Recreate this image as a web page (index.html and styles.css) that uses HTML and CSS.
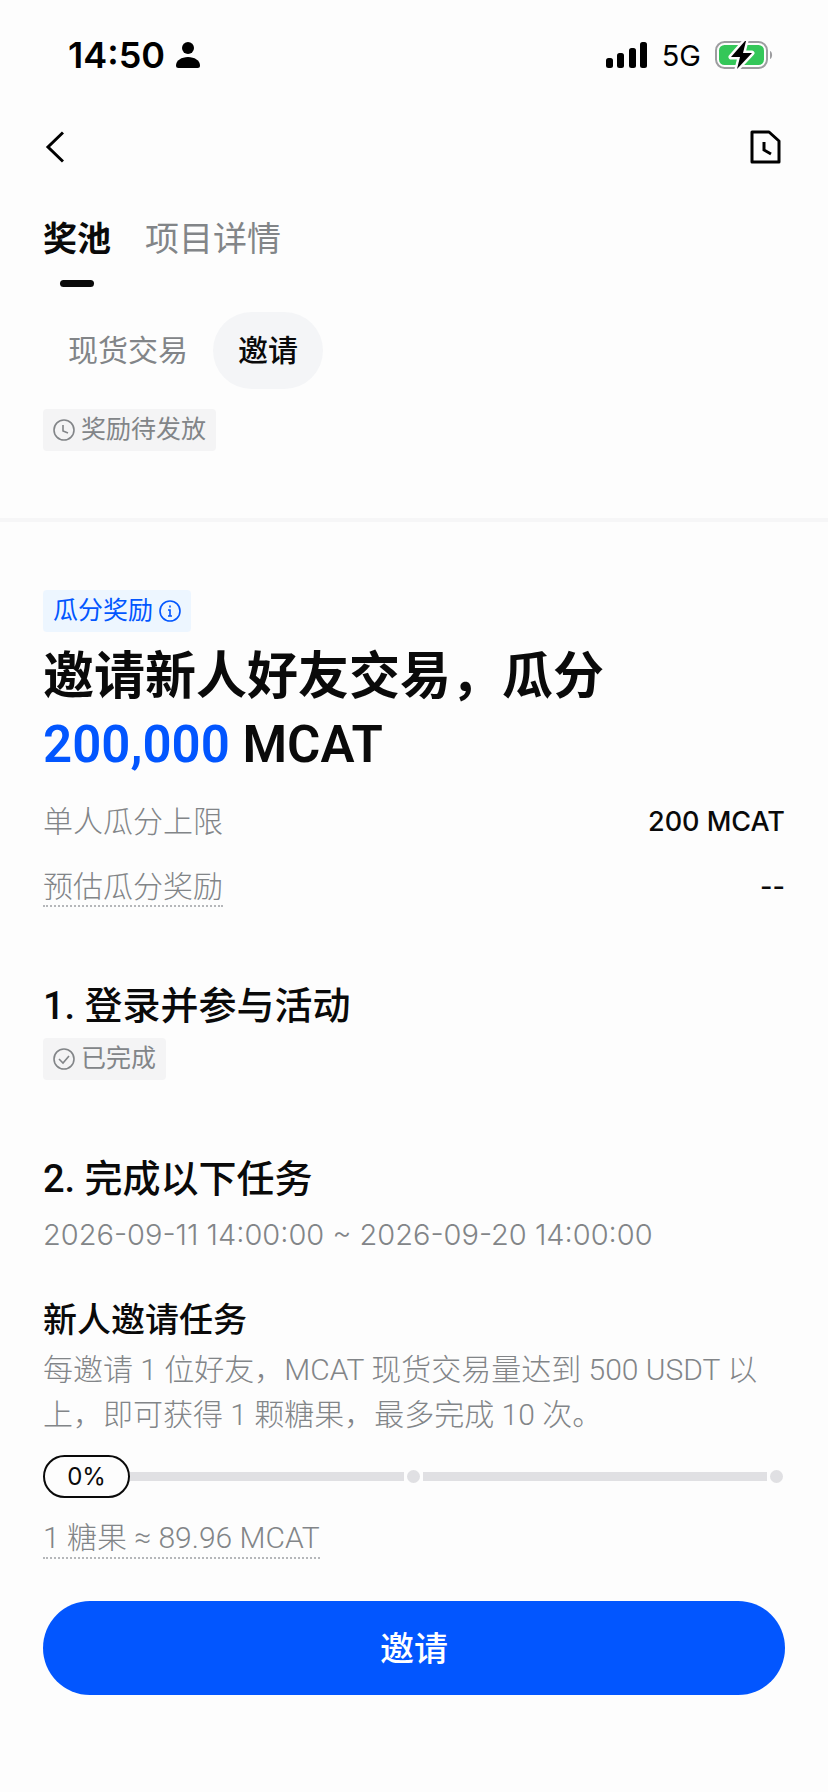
FILE: index.html
```
<!DOCTYPE html>
<html lang="zh-CN">
<head>
  <meta charset="utf-8">
  <meta name="viewport" content="width=device-width, initial-scale=1">
  <title>奖池</title>
  <link rel="stylesheet" href="styles.css">
</head>
<body>
  <div class="status-bar">
    <div class="status-left">
      <span class="time">14:50</span>
      <svg width="24" height="26" viewBox="0 0 24 26">
        <circle cx="12" cy="6" r="6"/>
        <path d="M0 23.5C0 18.5 5.5 15 12 15s12 3.500 12 8.500Q24 26 21.500 26h-19Q0 26 0 23.500z"/>
      </svg>
    </div>
    <div class="status-right">
      <svg width="42" height="26" viewBox="0 0 42 26">
        <rect x="0" y="16" width="7" height="10" rx="2.500"/>
        <rect x="11" y="11" width="7" height="15" rx="2.500"/>
        <rect x="23" y="6" width="7" height="20" rx="2.500"/>
        <rect x="34" y="0" width="7" height="26" rx="2.500"/>
      </svg>
      <span class="network">5G</span>
      <svg width="58" height="30" viewBox="0 0 58 30">
        <rect x="1" y="2" width="51" height="26" rx="8.500" fill="none" stroke="#9d9da0" stroke-width="2"/>
        <path d="M55 11c2.800 1 2.800 7 0 8z" fill="#9d9da0"/>
        <rect x="4" y="5" width="45" height="20" rx="5.500" fill="#34c759"/>
        <path d="M30 1L16 17h9l-3 12 15-16h-9l3-12z" fill="#000" stroke="#fdfdfd" stroke-width="5" stroke-linejoin="round"/>
        <path d="M30 1L16 17h9l-3 12 15-16h-9l3-12z" fill="#000"/>
      </svg>
    </div>
  </div>

  <header class="nav">
    <button type="button" class="icon-button" aria-label="返回">
      <svg width="21" height="32" viewBox="0 0 21 32" fill="none" stroke="#000" stroke-width="3">
        <path d="M20 1.500L5 16l15 14.500"/>
      </svg>
    </button>
    <button type="button" class="icon-button" aria-label="历史记录">
      <svg width="36" height="34" viewBox="0 0 36 34" fill="none" stroke="#000" stroke-width="3">
        <path d="M3 2h17l10 9v21H3z" stroke-linejoin="round"/>
        <path d="M15 12v8l7 4"/>
      </svg>
    </button>
  </header>

  <section class="pool">
    <nav class="tabs">
      <button type="button" class="tab active">奖池</button>
      <button type="button" class="tab">项目详情</button>
    </nav>
    <div class="pills">
      <button type="button" class="pill">现货交易</button>
      <button type="button" class="pill active">邀请</button>
    </div>
    <div class="tag">
      <svg width="22" height="22" viewBox="0 0 22 22" fill="none" stroke="currentColor" stroke-width="1.600">
        <circle cx="11" cy="11" r="10"/>
        <path d="M10 6v6l5 2"/>
      </svg>
      奖励待发放
    </div>
  </section>

  <main class="content">
    <div class="tag blue">
      瓜分奖励
      <svg width="22" height="22" viewBox="0 0 22 22" fill="none" stroke="currentColor" stroke-width="1.600">
        <circle cx="11" cy="11" r="10"/>
        <path d="M11 5.500v2M9 10h2v6M9 16h4"/>
      </svg>
    </div>
    <h1>邀请新人好友交易，瓜分<br><span class="amount">200,000</span> MCAT</h1>
    <div class="row">
      <span>单人瓜分上限</span>
      <span class="value">200 MCAT</span>
    </div>
    <div class="row">
      <span class="dotted">预估瓜分奖励</span>
      <span class="value">--</span>
    </div>

    <h2>1. 登录并参与活动</h2>
    <div class="tag">
      <svg width="22" height="22" viewBox="0 0 22 22" fill="none" stroke="currentColor" stroke-width="1.600">
        <circle cx="11" cy="11" r="10"/>
        <path d="M6 11l4 4 6-7"/>
      </svg>
      已完成
    </div>

    <h2>2. 完成以下任务</h2>
    <p class="period">2026-09-11 14:00:00 ~ 2026-09-20 14:00:00</p>

    <h3>新人邀请任务</h3>
    <p class="desc">每邀请 1 位好友，MCAT 现货交易量达到 500 USDT 以上，即可获得 1 颗糖果，最多完成 10 次。</p>
    <div class="progress" role="progressbar" aria-valuenow="0" aria-valuemin="0" aria-valuemax="100" aria-label="任务进度">
      <div class="half">
        <span class="percent">0%</span>
        <span class="track"></span>
      </div>
      <span class="dot"></span>
      <div class="half">
        <span class="track"></span>
        <span class="dot"></span>
      </div>
    </div>
    <span class="dotted candy">1 糖果 ≈ 89.96 MCAT</span>

    <button type="button" class="invite">邀请</button>
  </main>
</body>
</html>
```
FILE: styles.css
```
* {
  box-sizing: border-box;
}

body {
  margin: 0;
  background: #fdfdfd;
  color: #0a0a0a;
  font-family: Roboto, "Noto Sans CJK SC", sans-serif;
  font-size: 30px;
}

h1, h2, h3, p {
  margin: 0;
}

button {
  padding: 0;
  border: none;
  background: none;
  color: inherit;
  font-family: inherit;
  cursor: pointer;
}

svg {
  display: block;
  flex: none;
}

.status-bar {
  display: flex;
  justify-content: space-between;
  align-items: center;
  height: 110px;
  padding: 0 55px 0 68px;
  color: #000;
}

.status-left,
.status-right {
  display: flex;
  align-items: center;
}

.status-left {
  gap: 11px;
}

.status-right {
  gap: 14px;
}

.time {
  font-family: Inter, sans-serif;
  font-size: 36px;
  font-weight: 600;
}

.network {
  font-family: Inter, sans-serif;
  font-size: 29px;
}

.nav {
  display: flex;
  justify-content: space-between;
  align-items: center;
  height: 74px;
  padding: 0 43px;
}

.pool {
  padding: 31px 43px 67px;
  border-bottom: 4px solid #f6f6f7;
}

.tabs {
  display: flex;
  align-items: flex-start;
  gap: 34px;
}

.tab {
  color: #828588;
  font-size: 34px;
  font-weight: 400;
  line-height: 48px;
}

.tab.active {
  color: #0a0a0a;
  font-weight: 700;
}

.tab.active::after {
  content: "";
  display: block;
  width: 34px;
  height: 7px;
  margin: 17px auto 0;
  border-radius: 4px;
  background: #0a0a0a;
}

.pills {
  display: flex;
  margin-top: 25px;
}

.pill {
  height: 77px;
  padding: 0 25px 6px;
  border-radius: 39px;
  color: #828588;
  font-size: 30px;
}

.pill.active {
  background: #f4f5f7;
  color: #0a0a0a;
  font-weight: 500;
}

.pool .tag {
  margin-top: 20px;
}

.tag {
  display: flex;
  align-items: center;
  gap: 6px;
  width: max-content;
  height: 42px;
  padding: 0 10px;
  border-radius: 4px;
  background: #f4f4f5;
  color: #828588;
  font-size: 25px;
  line-height: 42px;
}

.tag.blue {
  background: #edf6ff;
  color: #0256ff;
}

.content {
  padding: 68px 43px 90px;
}

h1 {
  margin: 11px 0 25px;
  font-size: 51px;
  font-weight: 600;
  line-height: 68px;
}

.amount {
  color: #0256ff;
}

.row {
  display: flex;
  justify-content: space-between;
  color: #828588;
  font-weight: 300;
  line-height: 36px;
}

.row + .row {
  margin-top: 29px;
}

.value {
  color: #0a0a0a;
  font-family: Inter, sans-serif;
  font-size: 27px;
  font-weight: 500;
}

.dotted {
  border-bottom: 2px dotted #b5b7ba;
}

h2 {
  margin: 73px 0 6px;
  font-size: 38px;
  font-weight: 500;
  line-height: 52px;
}

.period {
  color: #828588;
  font-family: Inter, sans-serif;
  font-size: 29px;
  font-weight: 300;
  line-height: 48px;
}

h3 {
  margin: 37px 0 3px;
  font-size: 34px;
  font-weight: 500;
  line-height: 48px;
}

.desc {
  color: #828588;
  font-weight: 300;
  line-height: 45px;
}

.progress {
  display: flex;
  align-items: center;
  gap: 3px;
  margin: 18px 0 21px;
  padding-right: 2px;
}

.half {
  display: flex;
  flex: 1;
  align-items: center;
}

.half .dot {
  margin-left: 3px;
}

.percent {
  width: 87px;
  height: 43px;
  border: 2px solid #0a0a0a;
  border-radius: 22px;
  font-family: Inter, sans-serif;
  font-size: 24px;
  line-height: 39px;
  text-align: center;
}

.track {
  flex: 1;
  height: 9px;
  background: #e0e0e3;
}

.dot {
  width: 13px;
  height: 13px;
  border-radius: 50%;
  background: #e0e0e3;
}

.candy {
  display: block;
  width: max-content;
  color: #828588;
  font-weight: 300;
  line-height: 38px;
}

.invite {
  width: 100%;
  height: 94px;
  margin-top: 42px;
  padding-bottom: 4px;
  border-radius: 47px;
  background: #0256ff;
  color: #fff;
  font-size: 34px;
  font-weight: 500;
}
```
